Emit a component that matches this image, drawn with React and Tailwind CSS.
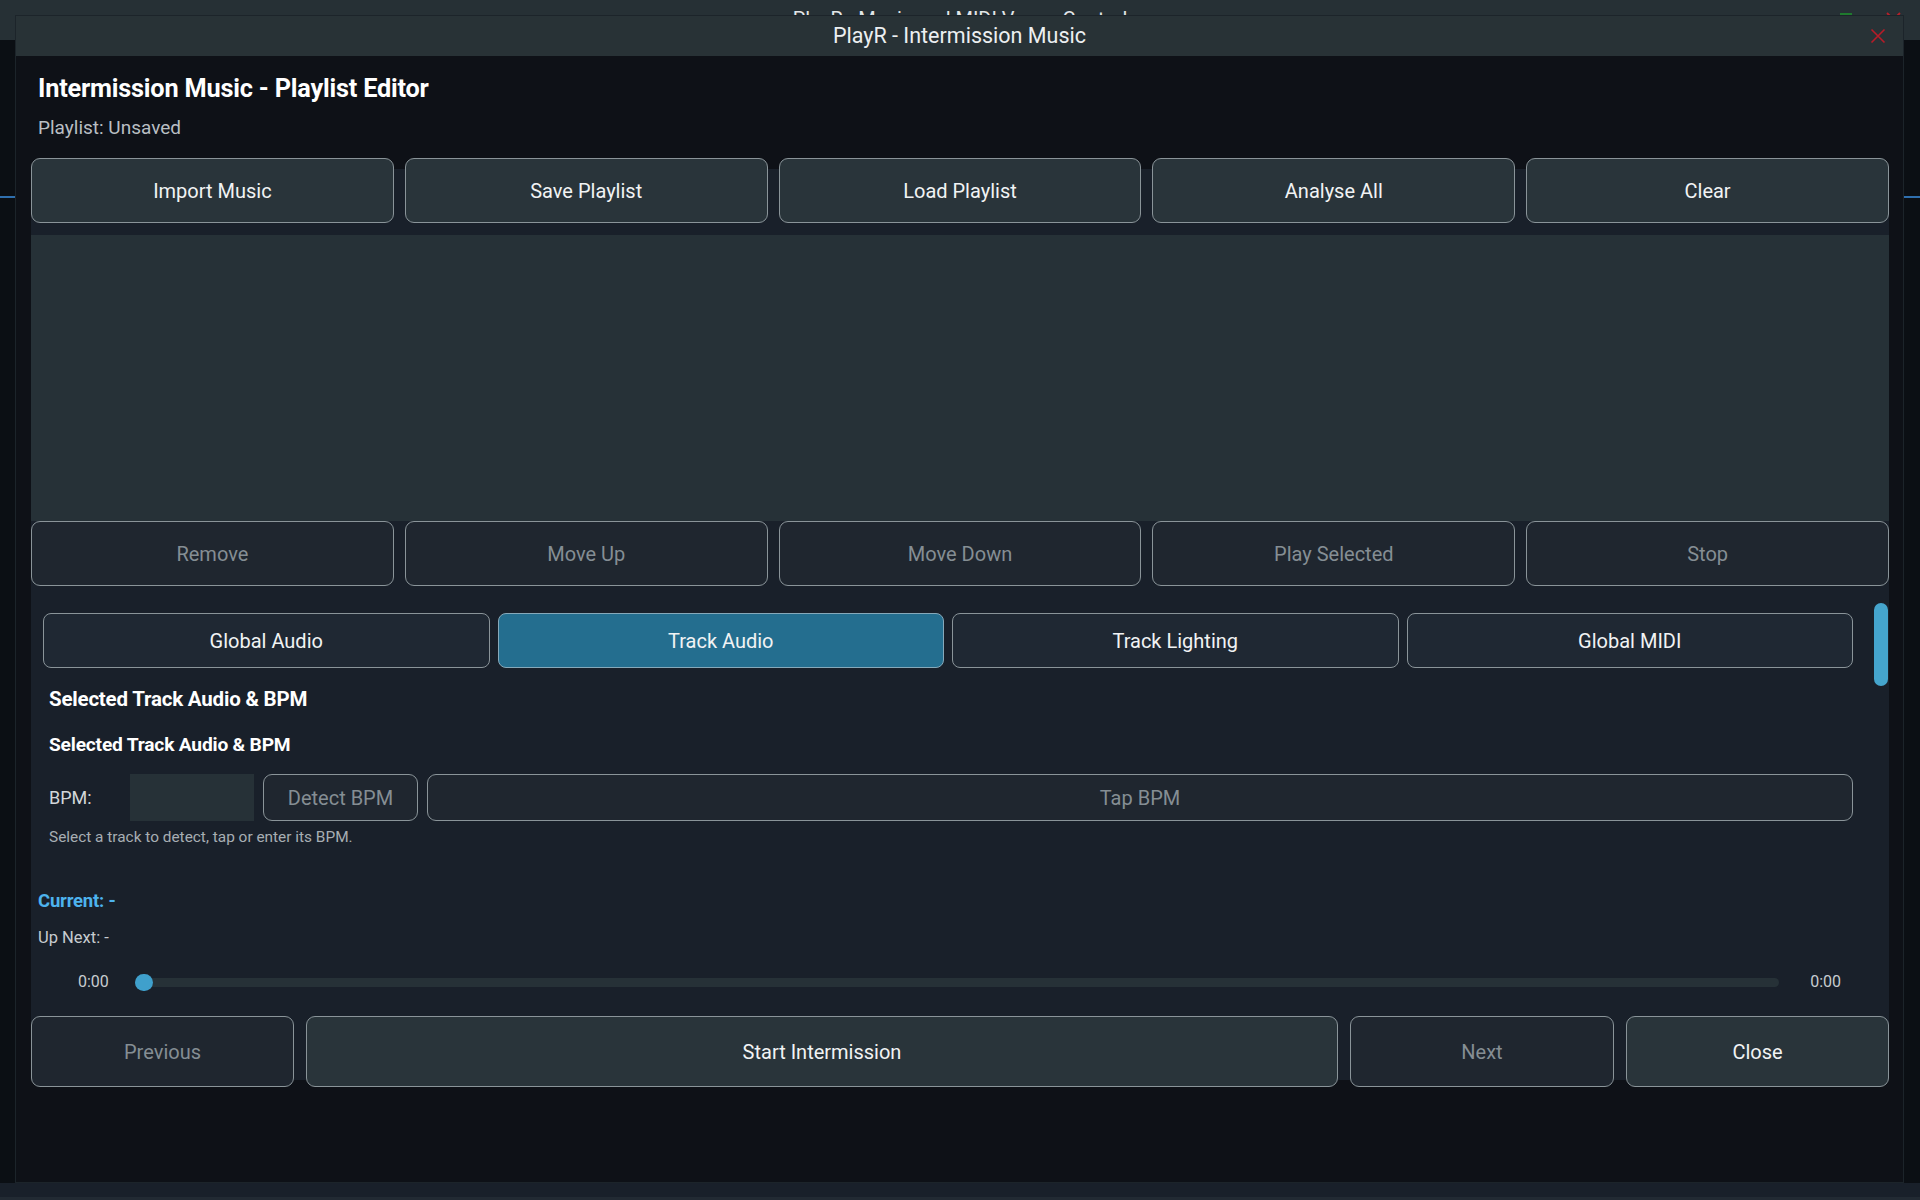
import React from "react";

const topButtons = ["Import Music", "Save Playlist", "Load Playlist", "Analyse All", "Clear"];
const listButtons = ["Remove", "Move Up", "Move Down", "Play Selected", "Stop"];
const tabs = ["Global Audio", "Track Audio", "Track Lighting", "Global MIDI"];

const btnBase = "flex items-center justify-center rounded-[9px] border-[1.5px] border-[#8a9499] text-[20px]";
const btnOn = `${btnBase} bg-[#29343a] text-[#f1f3f4]`;
const btnOff = `${btnBase} bg-[#1f262f] text-[#858e94]`;

const App = () => {
  return (
    <div className="relative w-[1920px] h-[1200px] overflow-hidden bg-[#0b0f14] font-['Roboto',sans-serif]">
      {/* main window behind the dialog */}
      <div className="relative h-[40px] bg-[#263035] flex justify-center">
        <span className="pt-[9px] leading-[20px] text-[20px] text-[#e3e6e8]">PlayR - Music and MIDI Venue Control</span>
        <div className="absolute left-[1840px] top-[13px] w-[12px] h-[10px] bg-[#1f7a2e]" />
        <svg className="absolute left-[1886px] top-[12px]" width="15" height="15" viewBox="0 0 15 15">
          <path d="M1 1L14 14M14 1L1 14" stroke="#b5202a" strokeWidth="1.8" />
        </svg>
      </div>
      <div className="absolute left-0 top-[196px] w-[15px] h-[2px] bg-[#2f6fae]" />
      <div className="absolute right-0 top-[196px] w-[16px] h-[2px] bg-[#2f6fae]" />
      <div className="absolute left-0 bottom-0 w-full h-[17px] bg-[#19202a] border-b-[3px] border-[#222a33]" />

      {/* dialog */}
      <div className="absolute left-[15px] top-[15px] w-[1889px] h-[1168px] bg-[#0e1117] border border-[#1c242a] flex flex-col">
        <div className="relative h-[40px] shrink-0 bg-[#283236] flex items-center justify-center">
          <span className="text-[21.5px] text-[#eceff1]">PlayR - Intermission Music</span>
          <svg className="absolute right-[17px] top-[12px]" width="16" height="16" viewBox="0 0 16 16">
            <path d="M1.5 1.5L14.5 14.5M14.5 1.5L1.5 14.5" stroke="#b71c28" strokeWidth="1.6" />
          </svg>
        </div>

        <div className="pl-[15px] pr-[14px]">
          <div className="pl-[7px]">
            <h1 className="pt-[16px] text-[25.3px] leading-[33px] font-bold text-white tracking-[-0.2px]">
              Intermission Music - Playlist Editor
            </h1>
            <p className="mt-[10px] text-[19px] leading-[25px] text-[#b9bfc3]">Playlist: Unsaved</p>
          </div>

          {/* file actions */}
          <div className="mt-[18px] grid grid-cols-5 gap-[11px] h-[65px] bg-[linear-gradient(to_bottom,transparent_11px,#19202a_11px)]">
            {topButtons.map((b) => (
              <button key={b} className={btnOn}>{b}</button>
            ))}
          </div>

          <div className="bg-[#19202a]">
            <div className="pt-[12px]">
              <div className="h-[286px] bg-[#263137]" />
            </div>

            <div className="grid grid-cols-5 gap-[11px] h-[65px]">
              {listButtons.map((b) => (
                <button key={b} className={btnOff}>{b}</button>
              ))}
            </div>

            {/* settings tabs */}
            <div className="flex h-[285px]">
              <div className="flex-1 pl-[12px] pt-[27px]">
                <div className="grid grid-cols-4 gap-[8px] h-[55px]">
                  {tabs.map((t) => (
                    <button
                      key={t}
                      className={`flex items-center justify-center rounded-[8px] border-[1.5px] text-[20px] text-[#f1f3f4] ${
                        t === "Track Audio" ? "bg-[#246e8f] border-[#86a9ba]" : "bg-[#1f2833] border-[#8a9499]"
                      }`}
                    >
                      {t}
                    </button>
                  ))}
                </div>
                <div className="pl-[6px]">
                  <h2 className="mt-[18px] text-[20.5px] leading-[26px] font-bold text-white tracking-[-0.2px]">Selected Track Audio &amp; BPM</h2>
                  <h3 className="mt-[21px] text-[19.2px] leading-[24px] font-bold text-white tracking-[-0.2px]">Selected Track Audio &amp; BPM</h3>
                  <div className="mt-[17px] flex h-[47px] gap-[9px]">
                    <span className="w-[72px] self-center text-[18px] text-[#d3d7da]">BPM:</span>
                    <div className="w-[124px] bg-[#263137]" />
                    <button className={`${btnOff} w-[155px] rounded-[8px]`}>Detect BPM</button>
                    <button className={`${btnOff} flex-1 rounded-[8px]`}>Tap BPM</button>
                  </div>
                  <p className="mt-[7px] text-[15.4px] leading-[18px] text-[#a7aeb3]">Select a track to detect, tap or enter its BPM.</p>
                </div>
              </div>
              <div className="w-[15px] ml-[21px] pt-[17px]">
                <div className="h-[83px] w-[14px] rounded-full bg-[#45a5cd]" />
              </div>
            </div>

            {/* now playing */}
            <div className="pl-[7px] pt-[18px]">
              <p className="text-[18.5px] leading-[24px] font-bold text-[#4db3ee] tracking-[-0.2px]">Current: -</p>
              <p className="mt-[14px] text-[16.5px] leading-[22px] text-[#c7ccd0]">Up Next: -</p>
            </div>
            <div className="mt-[23px] h-[20px] flex items-center pl-[47px] pr-[48px]">
              <span className="text-[16px] text-[#c7ccd0]">0:00</span>
              <div className="relative flex-1 ml-[26px] mr-[31px] h-[9px] rounded-full bg-[#263137]">
                <div className="absolute left-0 top-[-4px] w-[18px] h-[17px] rounded-full bg-[#3fa0cc]" />
              </div>
              <span className="text-[16px] text-[#c7ccd0]">0:00</span>
            </div>
            <div className="h-[24px]" />
          </div>

          {/* transport */}
          <div className="flex gap-[12px] h-[71px] bg-[linear-gradient(to_bottom,#19202a_64px,transparent_64px)]">
            <button className={`${btnOff} w-[263px]`}>Previous</button>
            <button className={`${btnOn} flex-1`}>Start Intermission</button>
            <button className={`${btnOff} w-[264px]`}>Next</button>
            <button className={`${btnOn} w-[263px]`}>Close</button>
          </div>
        </div>
      </div>
    </div>
  );
};

export default App;
